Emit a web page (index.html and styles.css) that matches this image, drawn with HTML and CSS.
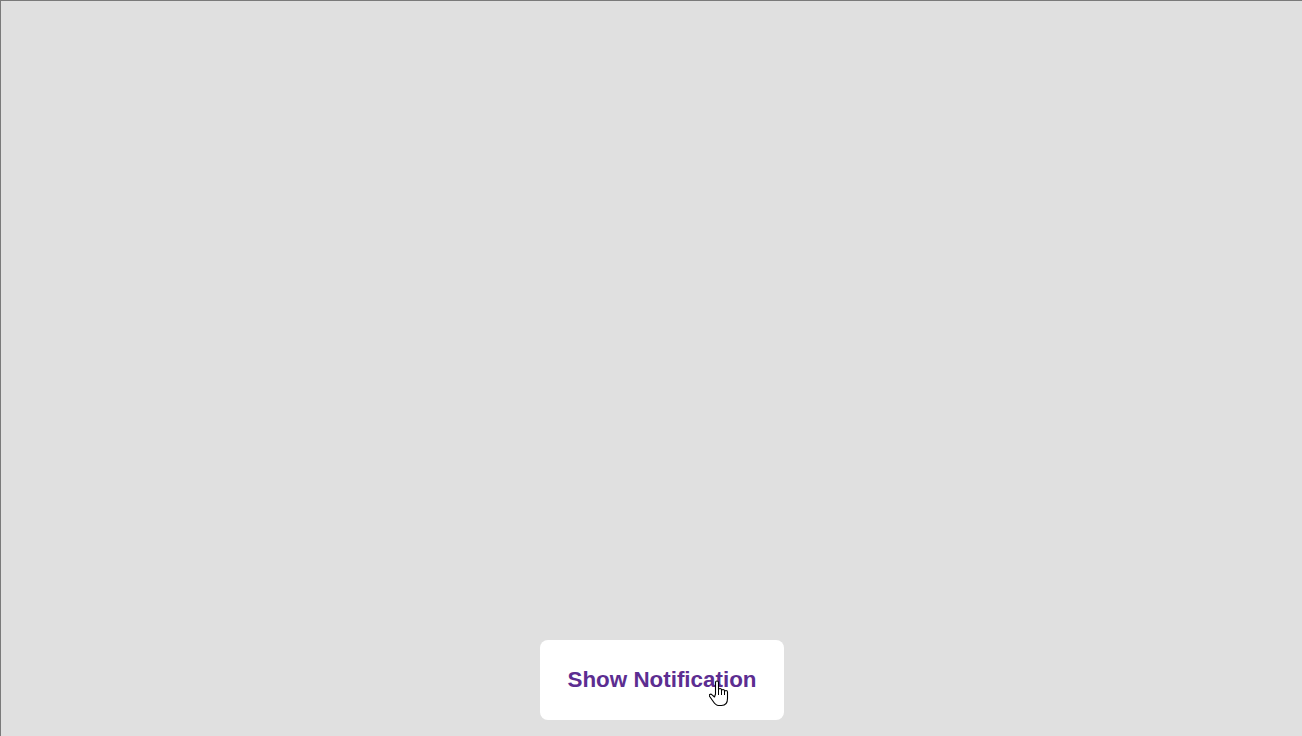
FILE: index.html
```html
<!DOCTYPE html>
<html lang="en">
<head>
<meta charset="utf-8">
<title>Notification</title>
<link rel="stylesheet" href="styles.css">
</head>
<body>
<div class="page">
  <div class="btn-wrap">
    <button class="show-btn" type="button">Show Notification</button>
    <svg class="cursor" width="21" height="27" viewBox="0 0 21 27" aria-hidden="true">
      <path d="M6.5 14 V2.5 a1.5 1.5 0 0 1 3 0 V10 a1.5 1.5 0 0 1 3 0 V11 a1.5 1.5 0 0 1 3 0 V12 a1.5 1.5 0 0 1 3 0 V18.5 c0 4 -2 7 -6 7 h-3 c-3 0 -4 -2 -6 -5 l-2.8 -4 a1.4 1.4 0 0 1 2.1 -1.9 l2.7 2.4 Z" fill="#fff" stroke="#000" stroke-width="1.1" stroke-linejoin="round"/>
      <path d="M9.5 10 v5 M12.5 11 v4 M15.5 12 v3" stroke="#000" stroke-width="1" fill="none"/>
    </svg>
  </div>
</div>
</body>
</html>
```
FILE: styles.css
```css
html, body {
  margin: 0;
  padding: 0;
  height: 100%;
}
body {
  background: #e0e0e0;
  font-family: "Liberation Sans", Arial, sans-serif;
  overflow: hidden;
}
.page {
  box-sizing: border-box;
  height: 736px;
  border-top: 1px solid #7a7a7a;
  border-left: 1px solid #7a7a7a;
  display: flex;
  flex-direction: column;
  justify-content: flex-end;
  align-items: center;
  padding-bottom: 16px;
}
.btn-wrap {
  position: relative;
  margin-left: 21px;
}
.show-btn {
  display: block;
  box-sizing: border-box;
  width: 244px;
  height: 80px;
  background: #ffffff;
  border: none;
  border-radius: 8px;
  color: #5c2d91;
  font-family: "Liberation Sans", Arial, sans-serif;
  font-weight: bold;
  font-size: 22.4px;
  padding: 0;
  cursor: pointer;
}
.cursor {
  position: absolute;
  left: 169px;
  top: 40px;
  pointer-events: none;
}
```
